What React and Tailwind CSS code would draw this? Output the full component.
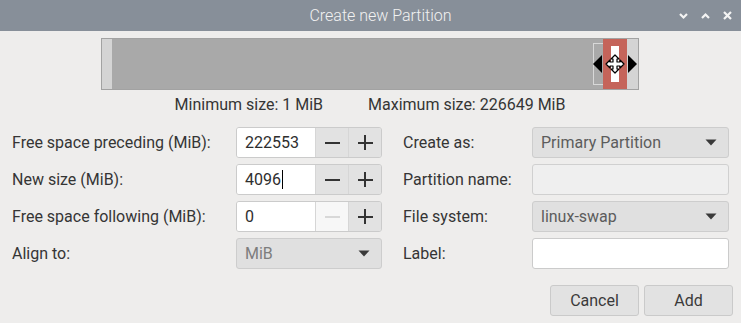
import React from 'react';

const font = { fontFamily: 'Roboto, "Noto Sans", sans-serif' };

function Chevron({ up }) {
  return (
    <svg width="9" height="8" viewBox="0 0 9 8" className="block">
      <path d={up ? 'M1 6 L4.5 2.5 L8 6' : 'M1 2 L4.5 5.5 L8 2'} fill="none" stroke="#f4f4f4" strokeWidth="2.2" />
    </svg>
  );
}

function Caret() {
  return (
    <svg width="12" height="7" viewBox="0 0 12 7" className="block">
      <path d="M0.5 0.5 L11.5 0.5 L6 6.5 Z" fill="#3a3a3a" />
    </svg>
  );
}

function Spin({ value, cursor, minusDisabled }) {
  return (
    <div className="flex w-[146px] h-[31px] border border-[#cbcbcb] rounded-[3px] overflow-hidden">
      <div className="flex-1 bg-white flex items-center pl-[8px] text-[16px] text-[#2e2e2e]">
        {value}
        {cursor && <span className="inline-block w-px h-[19px] bg-black ml-px" />}
      </div>
      <div className={`w-[33px] flex items-center justify-center border-l border-[#d6d6d6] ${minusDisabled ? 'bg-[#f7f7f7]' : 'bg-[#e2e2e2]'}`}>
        <span className={`block w-[15px] h-[2px] ${minusDisabled ? 'bg-[#d8d8d8]' : 'bg-[#333]'}`} />
      </div>
      <div className="w-[33px] flex items-center justify-center border-l border-[#d6d6d6] bg-[#e2e2e2] relative">
        <span className="block w-[15px] h-[2px] bg-[#333]" />
        <span className="absolute block w-[2px] h-[15px] bg-[#333]" />
      </div>
    </div>
  );
}

function Combo({ value, width, dim }) {
  return (
    <div className={`flex items-center justify-between h-[31px] ${width} border border-[#cdcdcd] rounded-[3px] bg-[#e0e0e0] pl-[8px] pr-[11px] text-[16px] ${dim ? 'text-[#7d7d7d]' : 'text-[#5c5c5c]'}`}>
      <span>{value}</span>
      <Caret />
    </div>
  );
}

function Row({ label, width, children }) {
  return (
    <div className="flex items-center h-[31px]">
      <div className={`${width} text-[16px] text-[#353535]`}>{label}</div>
      {children}
    </div>
  );
}

export default function App() {
  return (
    <div className="w-[741px] h-[323px] bg-[#eeedec] overflow-hidden" style={font}>
      {/* title bar */}
      <div className="relative h-[31px] bg-[#878f99] flex items-center justify-center pl-[20px]">
        <span className="text-[16px] font-light text-[#f2f2f2]">Create new Partition</span>
        <div className="absolute right-[9px] top-0 h-full flex items-center gap-[13px]">
          <Chevron />
          <Chevron up />
          <svg width="9" height="9" viewBox="0 0 9 9" className="block">
            <path d="M1 1 L8 8 M8 1 L1 8" stroke="#f4f4f4" strokeWidth="2.2" />
          </svg>
        </div>
      </div>

      {/* partition bar */}
      <div className="ml-[101px] mt-[7px] w-[538px] h-[52px] border border-[#a2a2a2] flex bg-[#d4d4d4]">
        <div className="w-[10px]" />
        <div className="flex-1 bg-[#a9a9a9] flex items-center justify-end">
          <div className="w-[10px] h-[42px] border border-[#d8d8d8] border-r-0" />
        </div>
        <div className="relative w-[24px] bg-[#c5645a] flex items-center justify-center">
          <div className="w-[8px] h-[36px] bg-white" />
          <svg width="48" height="24" viewBox="0 0 48 24" className="absolute left-[-12px] top-[13px]">
            <path d="M2 12 L11 3 L11 21 Z" fill="#000" />
            <path d="M46 12 L37 3 L37 21 Z" fill="#000" />
            <path d="M24 3 L28 7 L26 7 L26 10 L29 10 L29 8 L33 12 L29 16 L29 14 L26 14 L26 17 L28 17 L24 21 L20 17 L22 17 L22 14 L19 14 L19 16 L15 12 L19 8 L19 10 L22 10 L22 7 L20 7 Z" fill="#fff" stroke="#000" strokeWidth="1.2" strokeLinejoin="round" />
          </svg>
        </div>
        <div className="w-[11px]" />
      </div>

      {/* size limits */}
      <div className="ml-[101px] w-[538px] mt-[5px] flex justify-center gap-[45px] text-[16px] text-[#353535] leading-[20px]">
        <span>Minimum size: 1 MiB</span>
        <span>Maximum size: 226649 MiB</span>
      </div>

      {/* form */}
      <div className="flex mt-[12px] pl-[12px]">
        <div className="flex flex-col gap-[6px]">
          <Row label="Free space preceding (MiB):" width="w-[224px]"><Spin value="222553" /></Row>
          <Row label="New size (MiB):" width="w-[224px]"><Spin value="4096" cursor /></Row>
          <Row label="Free space following (MiB):" width="w-[224px]"><Spin value="0" minusDisabled /></Row>
          <Row label="Align to:" width="w-[224px]"><Combo value="MiB" width="w-[146px]" dim /></Row>
        </div>
        <div className="flex flex-col gap-[6px] ml-[21px]">
          <Row label="Create as:" width="w-[129px]"><Combo value="Primary Partition" width="w-[197px]" /></Row>
          <Row label="Partition name:" width="w-[129px]">
            <div className="w-[197px] h-[31px] border border-[#d0d0d0] rounded-[3px] bg-[#efefef]" />
          </Row>
          <Row label="File system:" width="w-[129px]"><Combo value="linux-swap" width="w-[197px]" /></Row>
          <Row label="Label:" width="w-[129px]">
            <div className="w-[197px] h-[31px] border border-[#cbcbcb] rounded-[3px] bg-white" />
          </Row>
        </div>
      </div>

      {/* buttons */}
      <div className="flex justify-end gap-[5px] pr-[8px] mt-[16px]">
        <button className="w-[89px] h-[31px] border border-[#cacaca] rounded-[3px] bg-[#e2e2e2] text-[16px] text-[#3a3a3a]">Cancel</button>
        <button className="w-[89px] h-[31px] border border-[#cacaca] rounded-[3px] bg-[#e2e2e2] text-[16px] text-[#3a3a3a]">Add</button>
      </div>
    </div>
  );
}
